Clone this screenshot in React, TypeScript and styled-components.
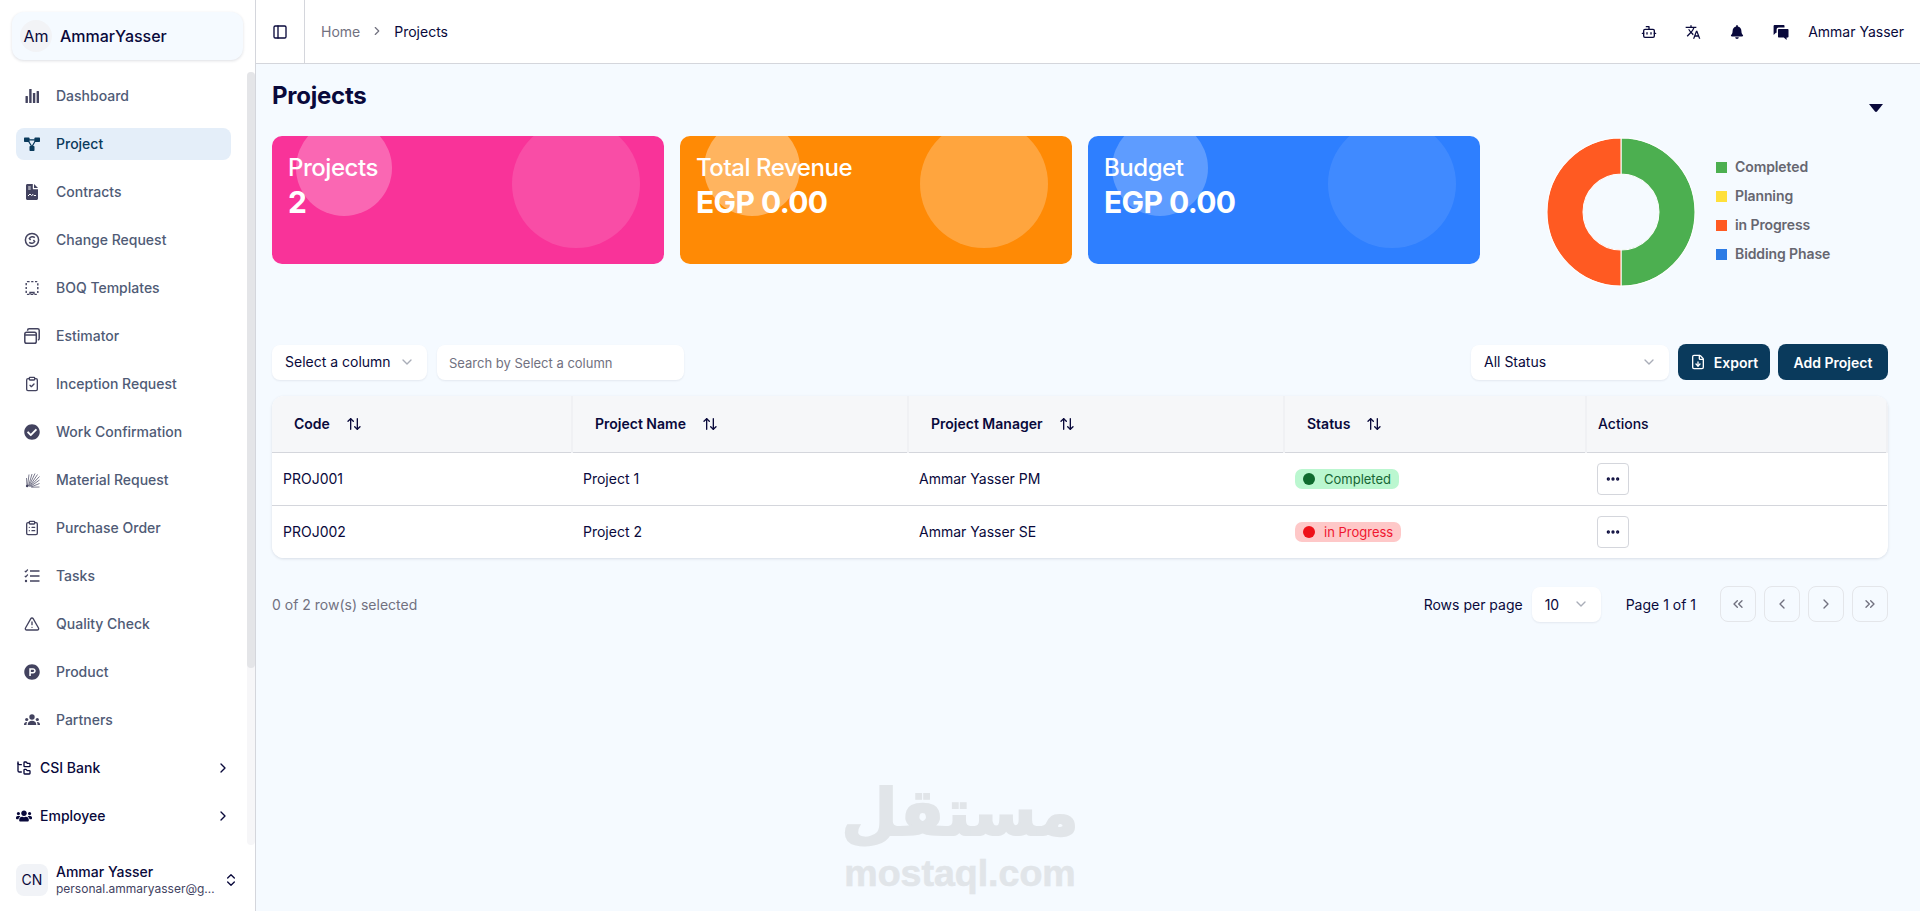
import React from 'react';
import styled, { createGlobalStyle } from 'styled-components';
import {
  PanelLeft, ChevronRight, ChevronDown, ChevronsUpDown, Bot, ClipboardCheck, ClipboardList,
  TriangleAlert, FolderTree, FileDown, Ellipsis, ArrowUpDown, ChevronsLeft, ChevronLeft, ChevronsRight,
} from 'lucide-react';
import { FaBell, FaCheckCircle, FaProductHunt, FaUsers } from 'react-icons/fa';
import { MdTranslate } from 'react-icons/md';

const Global = createGlobalStyle`
  html, body { margin: 0; padding: 0; height: 911px; overflow: hidden; background: #fff; }
  body { font-family: Inter, "Liberation Sans", sans-serif; color: #09093b; }
  * { box-sizing: border-box; }
`;

const Shell = styled.div`
  display: flex; width: 1920px; height: 911px; position: relative; overflow: hidden;
`;
const Sidebar = styled.aside`
  width: 256px; flex: none; height: 911px; background: #fff; border-right: 1px solid #d4d6dc;
  display: flex; flex-direction: column; padding-top: 12px;
`;
const Brand = styled.div`
  margin: 0 12px; width: 231px; height: 48px; border-radius: 12px; background: #f5faff;
  box-shadow: 0 1px 3px rgba(20, 30, 60, 0.14); display: flex; align-items: center; gap: 8px; padding-left: 8px;
`;
const BrandAvatar = styled.span`
  width: 32px; height: 32px; border-radius: 50%; background: #f2f3f6; display: flex; align-items: center;
  justify-content: center; font-size: 16px; color: #09093b;
`;
const BrandName = styled.span`font-size: 16px; font-weight: 500; color: #09093b;`;
const NavArea = styled.div`
  margin-top: 12px; height: 773px; display: flex; flex: none;
`;
const NavList = styled.nav`
  width: 247px; flex: none; padding-left: 16px;
`;
const ScrollTrack = styled.div`
  width: 8px; height: 773px; background: #f6f6f8; border-radius: 4px;
`;
const ScrollThumb = styled.div`
  width: 8px; height: 596px; background: #e4e5e8; border-radius: 4px;
`;
const NavItem = styled.a<{ $active?: boolean }>`
  width: 215px; height: 32px; margin: 8px 0 16px; padding-left: 8px; display: flex; align-items: center; gap: 16px;
  border-radius: 8px; font-size: 14px; font-weight: 500; color: ${p => (p.$active ? '#0a3a5c' : '#4f5b76')};
  background: ${p => (p.$active ? '#e4eef9' : 'transparent')};
  svg { width: 16px; height: 16px; flex: none; color: ${p => (p.$active ? '#0a3a5c' : '#43435f')}; }
`;
const NavLabel = styled.span`padding-bottom: 1px;`;
const GroupItem = styled.a`
  width: 215px; height: 32px; margin: 8px 0 16px; display: flex; align-items: center; gap: 8px;
  font-size: 14px; font-weight: 500; color: #09093b;
  svg { width: 16px; height: 16px; flex: none; }
`;
const GroupLabel = styled.span`flex: 1; padding-bottom: 1px;`;
const UserRow = styled.div`
  margin-top: 18px; padding-left: 16px; display: flex; align-items: center; gap: 8px;
`;
const UserAvatar = styled.span`
  width: 32px; height: 32px; border-radius: 8px; background: #f1f3f7; display: flex; align-items: center;
  justify-content: center; font-size: 14px; color: #09093b; flex: none;
`;
const UserText = styled.div`
  width: 159px; display: flex; flex-direction: column;
`;
const UserName = styled.span`font-size: 14px; font-weight: 500; line-height: 18px; color: #09093b;`;
const UserMail = styled.span`
  font-size: 12px; line-height: 15px; color: #42425f; white-space: nowrap; overflow: hidden; text-overflow: ellipsis;
`;
const Main = styled.main`
  flex: 1; min-width: 0; height: 911px; display: flex; flex-direction: column; background: #f5faff;
`;
const TopBar = styled.header`
  height: 64px; flex: none; background: #fff; border-bottom: 1px solid #d4d6dc; display: flex; align-items: stretch;
`;
const ToggleCell = styled.div`
  width: 49px; border-right: 1px solid #d4d6dc; display: flex; align-items: center; justify-content: center;
  svg { width: 16px; height: 16px; color: #09093b; }
`;
const Crumbs = styled.div`
  flex: 1; display: flex; align-items: center; padding-left: 16px; font-size: 14px; padding-bottom: 1px;
`;
const CrumbLink = styled.span`color: #71717f;`;
const CrumbSep = styled.span`
  display: flex; margin: 0 10px; color: #71717f; svg { width: 14px; height: 14px; }
`;
const CrumbNow = styled.span`color: #09093b;`;
const TopRight = styled.div`
  display: flex; align-items: center; padding-right: 16px; font-size: 14px; color: #09093b;
`;
const TopIcon = styled.span<{ $size?: number }>`
  width: 44px; display: flex; justify-content: center; color: #09093b;
  svg { width: ${p => p.$size ?? 16}px; height: ${p => p.$size ?? 16}px; }
`;
const TopName = styled.span`margin-left: 5px;`;
const Content = styled.div`
  padding: 16px 32px 0 16px; display: flex; flex-direction: column;
`;
const HeadRow = styled.div`
  height: 32px; display: flex; justify-content: space-between; margin-bottom: 24px;
`;
const Title = styled.h1`
  margin: 0; font-size: 24px; font-weight: 700; line-height: 32px; color: #09093b; letter-spacing: -0.25px;
`;
const Caret = styled.svg`
  width: 14px; height: 8px; align-self: flex-end; margin-right: 5px;
`;
const StatsRow = styled.div`
  display: flex; gap: 16px; height: 148px; margin-bottom: 60px; align-items: flex-start;
`;
const StatCard = styled.div<{ $bg: string }>`
  width: 392px; height: 128px; border-radius: 10px; background: ${p => p.$bg}; position: relative; overflow: hidden;
  padding: 16px; color: #fff;
`;
const Bubble = styled.span<{ $large?: boolean; $alpha: number }>`
  position: absolute; top: -16px; left: ${p => (p.$large ? 240 : 24)}px; width: ${p => (p.$large ? 128 : 96)}px;
  height: ${p => (p.$large ? 128 : 96)}px; border-radius: 50%; background: rgba(255, 255, 255, ${p => p.$alpha});
`;
const StatLabel = styled.div`
  position: relative; font-size: 24px; font-weight: 500; line-height: 32px; letter-spacing: -0.45px;
`;
const StatValue = styled.div`
  position: relative; font-size: 30px; font-weight: 700; line-height: 36px; letter-spacing: -0.6px;
`;
const ChartBox = styled.div`
  flex: 1; display: flex; padding-left: 50px; padding-top: 1px;
`;
const Donut = styled.svg`width: 150px; height: 150px; flex: none;`;
const Legend = styled.ul`
  list-style: none; margin: 0; padding: 20px 0 0 20px; display: flex; flex-direction: column; gap: 11px;
`;
const LegendRow = styled.li`
  display: flex; align-items: center; gap: 8px; height: 18px; font-size: 14px; font-weight: 600; color: #666670;
  letter-spacing: -0.1px;
`;
const Swatch = styled.span<{ $c: string }>`
  width: 11px; height: 11px; margin-top: 2px; background: ${p => p.$c}; flex: none;
`;
const Toolbar = styled.div`
  height: 36px; display: flex; align-items: center; justify-content: space-between; margin-bottom: 16px;
`;
const ToolGroup = styled.div<{ $gap: number }>`
  display: flex; align-items: center; gap: ${p => p.$gap}px;
`;
const SelectBox = styled.div<{ $w: number; $mr?: number }>`
  width: ${p => p.$w}px; height: 35px; background: #fff; border-radius: 8px; box-shadow: 0 1px 2px rgba(20, 30, 60, 0.08);
  display: flex; align-items: center; justify-content: space-between; padding: 0 12px 1px 13px; font-size: 14px; color: #09093b;
  margin-right: ${p => p.$mr ?? 0}px;
  svg { width: 16px; height: 16px; color: #a9adb8; }
`;
const SearchInput = styled.input`
  width: 247px; height: 35px; background: #fff; border: 0; border-radius: 8px; box-shadow: 0 1px 2px rgba(20, 30, 60, 0.08);
  padding: 2px 12px 0; font: 13px Inter, sans-serif; outline: none;
  &::placeholder { color: #71717f; opacity: 1; }
`;
const DarkButton = styled.button<{ $w: number }>`
  width: ${p => p.$w}px; height: 36px; border: 0; border-radius: 8px; background: #0a3a5c; color: #fff; font: 600 14px Inter, sans-serif;
  display: flex; align-items: center; justify-content: center; gap: 8px; padding: 0;
  svg { width: 16px; height: 16px; }
`;
const TableCard = styled.div`
  border-radius: 12px; overflow: hidden; box-shadow: 0 1px 3px rgba(20, 30, 60, 0.13); background: #fff;
`;
const Table = styled.table`
  width: 1616px; border-collapse: collapse; table-layout: fixed; font-size: 14px; color: #09093b;
`;
const HeadRowT = styled.tr`
  height: 56px; background: #f6f7f9; border-bottom: 1px solid #d4d6dc;
`;
const Th = styled.th`
  padding: 0; font-weight: 600; text-align: left; border-right: 2px solid #f0f1f4;
  &:last-child { font-weight: 500; padding-left: 11px; }
`;
const ThInner = styled.span`
  display: flex; align-items: center; gap: 16px; padding-left: 22px;
  svg { width: 16px; height: 16px; }
`;
const Tr = styled.tr`
  height: 53px; background: #fff; & + & { border-top: 1px solid #d4d6dc; }
`;
const Td = styled.td`padding: 0 11px;`;
const Badge = styled.span<{ $bg: string; $fg: string }>`
  display: inline-flex; align-items: center; gap: 9px; height: 20px; padding: 0 8px; border-radius: 7px; font-size: 13px;
  background: ${p => p.$bg}; color: ${p => p.$fg}; vertical-align: middle;
`;
const Dot = styled.i<{ $c: string }>`
  width: 12px; height: 12px; border-radius: 50%; background: ${p => p.$c};
`;
const ActionBtn = styled.button`
  width: 32px; height: 32px; border: 1px solid #d4d6dc; border-radius: 4px; background: #fff; padding: 0; color: #09093b;
  display: flex; align-items: center; justify-content: center; svg { width: 16px; height: 16px; stroke-width: 3; }
`;
const Pager = styled.div`
  display: flex; align-items: center; justify-content: space-between; margin-top: 28px; height: 36px; font-size: 14px;
`;
const Selected = styled.span`color: #71717f;`;
const PagerRight = styled.div`display: flex; align-items: center; color: #09093b;`;
const PageSelect = styled.div`
  width: 69px; height: 35px; margin: 0 25px 0 9px; background: #fff; border-radius: 8px; box-shadow: 0 1px 2px rgba(20, 30, 60, 0.08);
  display: flex; align-items: center; justify-content: space-between; padding: 0 12px 0 13px; svg { width: 16px; height: 16px; color: #a9adb8; }
`;
const PageText = styled.span`margin-right: 24px;`;
const PageBtns = styled.div`display: flex; gap: 8px;`;
const PageBtn = styled.button`
  width: 36px; height: 36px; background: transparent; border: 1px solid #e4e6ea; border-radius: 8px; padding: 0; color: #71717f;
  display: flex; align-items: center; justify-content: center; svg { width: 16px; height: 16px; }
`;
const Watermark = styled.div`
  position: absolute; left: 845px; top: 771px; width: 230px; display: flex; flex-direction: column; align-items: center;
  color: #e1e5e9; pointer-events: none;
`;
const WmArabic = styled.span`
  font: 700 65px/84px "DejaVu Sans", sans-serif; white-space: nowrap; -webkit-text-stroke: 2px #e1e5e9;
`;
const WmLatin = styled.span`
  font: 700 37.5px/36px "Liberation Sans", Arial, sans-serif; white-space: nowrap; -webkit-text-stroke: 0.6px #e1e5e9;
`;

const Bars = () => (
  <svg viewBox="0 0 16 16" fill="currentColor"><rect x="1.500" y="8" width="2.400" height="7" rx=".5" /><rect x="5.200" y="1" width="2.400" height="14" rx=".5" /><rect x="8.900" y="5" width="2.400" height="10" rx=".5" /><rect x="12.600" y="3" width="2.400" height="12" rx=".5" /></svg>
);
const Nodes = () => (
  <svg viewBox="0 0 16 16" fill="currentColor"><rect x="0" y="1.500" width="5.500" height="4.500" rx=".7" /><rect x="10.500" y="1.500" width="5.500" height="4.500" rx=".7" /><rect x="5.500" y="10" width="5" height="5" rx=".7" /><path d="M4 3.200h8v1.200H4zM3.400 4.500l1-.7 4 6.600-1 .7zM11 4.200l1 .6-3.200 5.600-1-.6z" /></svg>
);
const FileSign = () => (
  <svg viewBox="0 0 16 16" fill="currentColor"><path d="M3.400 0h5.400v4.400c0 .5.4.9.9.9H14v9.200c0 .8-.7 1.500-1.500 1.500h-9c-.8 0-1.500-.7-1.500-1.500v-13C2 .7 2.600 0 3.400 0zM10 0l4 4h-4z" /><path d="M4 12l2-2 1.500 1.500L9 10.500l1 1h2" fill="none" stroke="#fff" strokeWidth="1" /><path d="M4.200 3h2.500M4.200 5h2.500" stroke="#fff" strokeWidth="1" /></svg>
);
const Cycle = () => (
  <svg viewBox="0 0 16 16" fill="none" stroke="currentColor" strokeWidth="1.500"><circle cx="8" cy="8" r="6.600" /><path d="M10.800 5.600A3.600 3.600 0 0 0 5.300 6.500L6.600 8M5.200 10.400a3.600 3.600 0 0 0 5.500-.9L9.400 8" /></svg>
);
const DashedBox = () => (
  <svg viewBox="0 0 16 16" fill="none" stroke="currentColor" strokeWidth="1.400"><rect x="2.200" y="1.600" width="11.600" height="12.800" rx="1.200" strokeDasharray="2.200 1.600" /><path d="M6 14.500v-2h4v2" /></svg>
);
const Windows = () => (
  <svg viewBox="0 0 16 16" fill="none" stroke="currentColor" strokeWidth="1.500"><rect x=".8" y="4.200" width="11.500" height="11" rx="1.800" /><path d="M1 7h11" /><path d="M3.600 2.800V2.200C3.600 1.300 4.300.8 5.100.8h8.500c.9 0 1.600.7 1.600 1.500v8.200c0 .8-.5 1.400-1.300 1.500" /></svg>
);
const Burst = () => (
  <svg viewBox="0 0 16 16" fill="none" stroke="currentColor" strokeWidth=".7"><path d="M3 14L2.500 6M3.500 14L5 2.500M4.500 14L8 2M5 14L11 1.500M5.500 14.500L13.500 2.500M6 14.500L15.500 4.500M6.500 14.500L15.500 8M7 15L15.500 11.500M7.500 15.200L15.500 15" /><circle cx="3.200" cy="14" r="1.300" fill="currentColor" stroke="none" /></svg>
);
const Tasks = () => (
  <svg viewBox="0 0 16 16" fill="none" stroke="currentColor"><path d="M6 3h9.500M6 8h9.500M6 13h9.500" strokeWidth="1.700" /><path d="M.8 2.800l1 1L3.800 1.500M.8 7.800l1 1L3.800 6.500" strokeWidth="1.200" /><circle cx="2" cy="13" r="1.200" fill="currentColor" stroke="none" /></svg>
);
const Partners = () => (
  <svg viewBox="0 0 16 16" fill="currentColor"><circle cx="8" cy="5" r="2.700" /><path d="M3.800 12.200c0-2 1.800-3.500 4.200-3.500s4.200 1.500 4.200 3.500v.8H3.800z" /><circle cx="2.700" cy="7.500" r="1.600" /><circle cx="13.300" cy="7.500" r="1.600" /><path d="M0 12.500c0-1.600 1-2.600 2.700-2.600.3 0 .4 0 .5.100-.5.600-.7 1.400-.7 2.200v.8H0zM16 12.500c0-1.600-1-2.600-2.700-2.600-.3 0-.4 0-.5.100.5.600.7 1.400.7 2.200v.8H16z" /></svg>
);
const Chat = () => (
  <svg viewBox="0 0 16 16" fill="currentColor"><path d="M1.500 1h9c.6 0 1 .4 1 1v1.600H5.600c-1.100 0-2 .9-2 2v3.200H2.900L.6 11V2c0-.6.4-1 .9-1z" /><path d="M6 5h8.500c.6 0 1 .4 1 1v6.500c0 .6-.4 1-1 1h-.9V16l-2.800-2.500H6c-.6 0-1-.4-1-1V6c0-.6.4-1 1-1z" /></svg>
);

const navItems: { label: string; icon: React.ReactNode; active?: boolean }[] = [
  { label: 'Dashboard', icon: <Bars /> },
  { label: 'Project', icon: <Nodes />, active: true },
  { label: 'Contracts', icon: <FileSign /> },
  { label: 'Change Request', icon: <Cycle /> },
  { label: 'BOQ Templates', icon: <DashedBox /> },
  { label: 'Estimator', icon: <Windows /> },
  { label: 'Inception Request', icon: <ClipboardCheck /> },
  { label: 'Work Confirmation', icon: <FaCheckCircle /> },
  { label: 'Material Request', icon: <Burst /> },
  { label: 'Purchase Order', icon: <ClipboardList /> },
  { label: 'Tasks', icon: <Tasks /> },
  { label: 'Quality Check', icon: <TriangleAlert /> },
  { label: 'Product', icon: <FaProductHunt /> },
  { label: 'Partners', icon: <Partners /> },
];

const stats = [
  { label: 'Projects', value: '2', bg: '#f93399', small: 0.26, large: 0.13 },
  { label: 'Total Revenue', value: 'EGP 0.00', bg: '#ff8a05', small: 0.36, large: 0.23 },
  { label: 'Budget', value: 'EGP 0.00', bg: '#2e7fff', small: 0.23, large: 0.09 },
];

const legend = [
  { label: 'Completed', c: '#4caf50' },
  { label: 'Planning', c: '#ffe03b' },
  { label: 'in Progress', c: '#ff5a22' },
  { label: 'Bidding Phase', c: '#2c7be5' },
];

const rows = [
  { code: 'PROJ001', name: 'Project 1', pm: 'Ammar Yasser PM', status: 'Completed', bg: '#bbf7d0', fg: '#166534', dot: '#0f6a2e' },
  { code: 'PROJ002', name: 'Project 2', pm: 'Ammar Yasser SE', status: 'in Progress', bg: '#fec8c8', fg: '#f0162f', dot: '#ee1119' },
];

const columns = [
  { label: 'Code', w: 300 },
  { label: 'Project Name', w: 336 },
  { label: 'Project Manager', w: 376 },
  { label: 'Status', w: 302 },
];

export default function App() {
  return (
    <Shell>
      <Global />
      <Sidebar>
        <Brand>
          <BrandAvatar>Am</BrandAvatar>
          <BrandName>AmmarYasser</BrandName>
        </Brand>
        <NavArea>
          <NavList>
            {navItems.map(i => (
              <NavItem key={i.label} $active={i.active}>{i.icon}<NavLabel>{i.label}</NavLabel></NavItem>
            ))}
            <GroupItem><FolderTree /><GroupLabel>CSI Bank</GroupLabel><ChevronRight /></GroupItem>
            <GroupItem><FaUsers /><GroupLabel>Employee</GroupLabel><ChevronRight /></GroupItem>
          </NavList>
          <ScrollTrack><ScrollThumb /></ScrollTrack>
        </NavArea>
        <UserRow>
          <UserAvatar>CN</UserAvatar>
          <UserText>
            <UserName>Ammar Yasser</UserName>
            <UserMail>personal.ammaryasser@gmail.com</UserMail>
          </UserText>
          <ChevronsUpDown size={16} strokeWidth={2} />
        </UserRow>
      </Sidebar>
      <Main>
        <TopBar>
          <ToggleCell><PanelLeft /></ToggleCell>
          <Crumbs>
            <CrumbLink>Home</CrumbLink>
            <CrumbSep><ChevronRight /></CrumbSep>
            <CrumbNow>Projects</CrumbNow>
          </Crumbs>
          <TopRight>
            <TopIcon><Bot /></TopIcon>
            <TopIcon><MdTranslate /></TopIcon>
            <TopIcon $size={14}><FaBell /></TopIcon>
            <TopIcon><Chat /></TopIcon>
            <TopName>Ammar Yasser</TopName>
          </TopRight>
        </TopBar>
        <Content>
          <HeadRow>
            <Title>Projects</Title>
            <Caret viewBox="0 0 14 8"><path d="M0 0h14L8 7.500c-.5.500-1.500.500-2 0z" fill="#09093b" /></Caret>
          </HeadRow>
          <StatsRow>
            {stats.map(s => (
              <StatCard key={s.label} $bg={s.bg}>
                <Bubble $alpha={s.small} />
                <Bubble $large $alpha={s.large} />
                <StatLabel>{s.label}</StatLabel>
                <StatValue>{s.value}</StatValue>
              </StatCard>
            ))}
            <ChartBox>
              <Donut viewBox="0 0 148 148">
                <path d="M74 1a73 73 0 0 1 0 146V111.500a37.500 37.500 0 0 0 0-75z" fill="#4caf50" stroke="#fff" strokeWidth="1" />
                <path d="M74 1a73 73 0 0 0 0 146V111.500a37.500 37.500 0 0 1 0-75z" fill="#ff5a22" stroke="#fff" strokeWidth="1" />
              </Donut>
              <Legend>
                {legend.map(l => (
                  <LegendRow key={l.label}><Swatch $c={l.c} />{l.label}</LegendRow>
                ))}
              </Legend>
            </ChartBox>
          </StatsRow>
          <Toolbar>
            <ToolGroup $gap={10}>
              <SelectBox $w={155}>Select a column<ChevronDown /></SelectBox>
              <SearchInput placeholder="Search by Select a column" />
            </ToolGroup>
            <ToolGroup $gap={8}>
              <SelectBox $w={198} $mr={1}>All Status<ChevronDown /></SelectBox>
              <DarkButton $w={92}><FileDown />Export</DarkButton>
              <DarkButton $w={110}>Add Project</DarkButton>
            </ToolGroup>
          </Toolbar>
          <TableCard>
            <Table>
              <colgroup>
                {columns.map(c => <col key={c.label} width={c.w} />)}
                <col />
              </colgroup>
              <thead>
                <HeadRowT>
                  {columns.map(c => (
                    <Th key={c.label}><ThInner>{c.label}<ArrowUpDown /></ThInner></Th>
                  ))}
                  <Th>Actions</Th>
                </HeadRowT>
              </thead>
              <tbody>
                {rows.map(r => (
                  <Tr key={r.code}>
                    <Td>{r.code}</Td>
                    <Td>{r.name}</Td>
                    <Td>{r.pm}</Td>
                    <Td><Badge $bg={r.bg} $fg={r.fg}><Dot $c={r.dot} />{r.status}</Badge></Td>
                    <Td><ActionBtn><Ellipsis /></ActionBtn></Td>
                  </Tr>
                ))}
              </tbody>
            </Table>
          </TableCard>
          <Pager>
            <Selected>0 of 2 row(s) selected</Selected>
            <PagerRight>
              Rows per page
              <PageSelect>10<ChevronDown /></PageSelect>
              <PageText>Page 1 of 1</PageText>
              <PageBtns>
                <PageBtn><ChevronsLeft /></PageBtn>
                <PageBtn><ChevronLeft /></PageBtn>
                <PageBtn><ChevronRight /></PageBtn>
                <PageBtn><ChevronsRight /></PageBtn>
              </PageBtns>
            </PagerRight>
          </Pager>
        </Content>
      </Main>
      <Watermark>
        <WmArabic>مستقل</WmArabic>
        <WmLatin>mostaql.com</WmLatin>
      </Watermark>
    </Shell>
  );
}
